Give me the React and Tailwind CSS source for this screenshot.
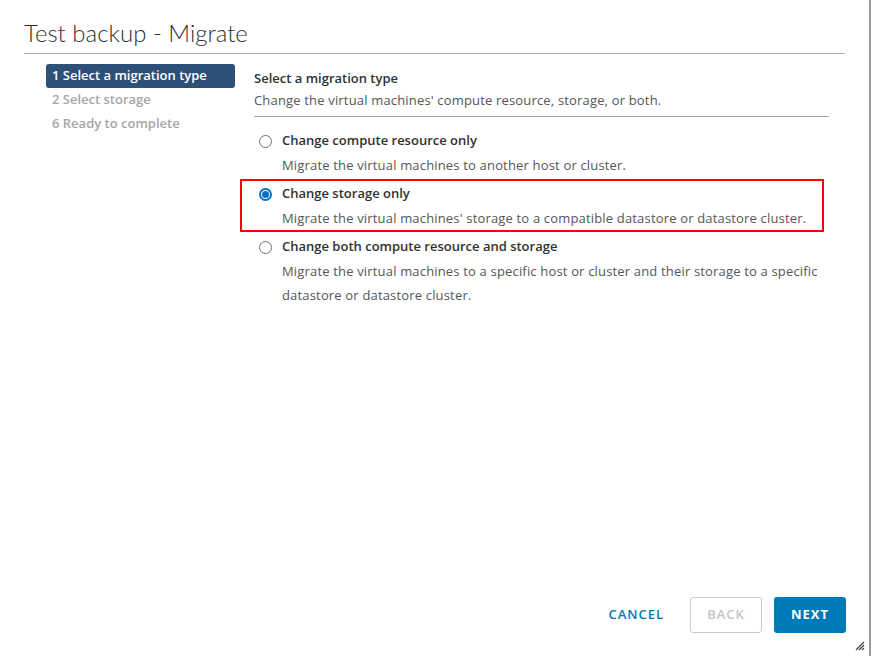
import React from 'react'

const body = { fontFamily: '"Open Sans", Lato, sans-serif' }
const heading = { fontFamily: 'Lato, "Open Sans", sans-serif' }

function Radio({ checked }) {
  return checked ? (
    <span className="flex h-[13px] w-[13px] items-center justify-center rounded-full border-2 border-[#0072c6] bg-white">
      <span className="h-[7px] w-[7px] rounded-full bg-[#0072c6]" />
    </span>
  ) : (
    <span className="h-[13px] w-[13px] rounded-full border border-[#707070] bg-white" />
  )
}

function Option({ title, desc, checked, highlight }) {
  return (
    <div
      className={
        'w-[584px] border-2 pl-[17px] pt-[1px] ' +
        (highlight ? 'border-[#ff0000]' : 'border-transparent')
      }
    >
      <div className="flex h-[24px] items-center gap-[10px]">
        <Radio checked={checked} />
        <span className="text-[13px] font-semibold text-[#313131]">{title}</span>
      </div>
      <div className="pl-[23px] pr-[2px] text-[13px] leading-[24px] tracking-[0.17px] text-[#565656]">
        {desc}
      </div>
    </div>
  )
}

export default function App() {
  const steps = [
    { label: '1 Select a migration type', active: true },
    { label: '2 Select storage' },
    { label: '6 Ready to complete' },
  ]

  return (
    <div className="h-[656px] w-[872px] overflow-hidden bg-white" style={body}>
      <div className="relative flex h-full w-[871px] flex-col border-r-2 border-[#9a9a9a]">
        <div className="px-[24px] pt-[18px]">
          <h1
            className="border-b border-[#a8a8a8] pb-[5px] text-[24px] font-light leading-[30px] text-[#313131]"
            style={heading}
          >
            Test backup - Migrate
          </h1>
        </div>

        <div className="flex flex-1 pt-[10px]">
          <div className="w-[230px] shrink-0 pl-[46px]">
            {steps.map((s) => (
              <div
                key={s.label}
                className={
                  s.active
                    ? 'flex h-[24px] w-[189px] items-center rounded-[3px] bg-[#2d5079] px-[6px] text-[13px] font-semibold text-white'
                    : 'flex h-[24px] items-center px-[6px] text-[13px] font-semibold text-[#a6a6a6]'
                }
              >
                {s.label}
              </div>
            ))}
          </div>

          <div className="flex-1 pl-[24px] pr-[40px]">
            <div className="border-b border-[#a8a8a8] pb-[5px] pt-[3px]">
              <div className="text-[13px] font-semibold leading-[22px] text-[#313131]">
                Select a migration type
              </div>
              <div className="text-[13px] leading-[22px] tracking-[0.17px] text-[#565656]">
                Change the virtual machines' compute resource, storage, or both.
              </div>
            </div>
            <div className="-ml-[14px] pt-[9px]">
              <Option
                title="Change compute resource only"
                desc="Migrate the virtual machines to another host or cluster."
              />
              <Option
                checked
                highlight
                title="Change storage only"
                desc="Migrate the virtual machines' storage to a compatible datastore or datastore cluster."
              />
              <Option
                title="Change both compute resource and storage"
                desc="Migrate the virtual machines to a specific host or cluster and their storage to a specific datastore or datastore cluster."
              />
            </div>
          </div>
        </div>

        <div className="flex items-center justify-end gap-[12px] pl-[24px] pr-[23px] pb-[23px]">
          <button className="h-[36px] px-[14px] text-[13px] font-semibold tracking-[1px] text-[#0079b8]">
            CANCEL
          </button>
          <button className="h-[36px] w-[72px] rounded-[3px] border border-[#cccccc] text-[13px] font-semibold tracking-[1px] text-[#c4c4c4]">
            BACK
          </button>
          <button className="h-[36px] w-[72px] rounded-[3px] bg-[#0079b8] text-[13px] font-bold tracking-[1px] text-white">
            NEXT
          </button>
        </div>

        <svg className="absolute bottom-[5px] right-[4px]" width="10" height="10" viewBox="0 0 10 10">
          <path d="M9 1 L1 9 M9 4 L4 9 M9 7 L7 9" stroke="#444" strokeWidth="1.2" />
        </svg>
      </div>
    </div>
  )
}
